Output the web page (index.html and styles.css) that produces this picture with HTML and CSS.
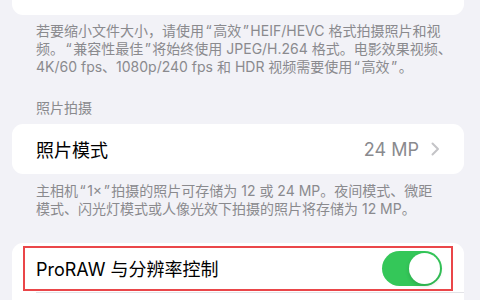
FILE: index.html
```html
<!DOCTYPE html>
<html lang="zh-CN">
<head>
<meta charset="utf-8">
<link rel="stylesheet" href="styles.css">
</head>
<body>
<div class="page">
  <div class="card card-top"></div>
  <p class="foot foot-1">若要缩小文件大小，请使用<span class="q">“</span>高效<span class="q">”</span>HEIF/HEVC 格式拍摄照片和视<br>频。<span class="q">“</span>兼容性最佳<span class="q">”</span>将始终使用 JPEG/H.264 格式。电影效果视频、<br>4K/60 fps、1080p/240 fps 和 HDR 视频需要使用<span class="q">“</span>高效<span class="q">”</span>。</p>
  <p class="head">照片拍摄</p>
  <div class="card">
    <div class="row">
      <span class="label">照片模式</span>
      <span class="value">24 MP</span>
      <svg class="chev" width="9" height="14" viewBox="0 0 9 14"><path d="M1.5 1.5 L7 7 L1.5 12.5" fill="none" stroke="#c4c4c7" stroke-width="2" stroke-linecap="round" stroke-linejoin="round"/></svg>
    </div>
  </div>
  <p class="foot foot-2">主相机<span class="q">“</span>1×<span class="q">”</span>拍摄的照片可存储为 12 或 24 MP。夜间模式、微距<br>模式、闪光灯模式或人像光效下拍摄的照片将存储为 12 MP。</p>
  <div class="card card-last">
    <div class="row row-sep">
      <span class="label">ProRAW 与分辨率控制</span>
      <span class="toggle"><span class="knob"></span></span>
      <span class="mark"></span>
    </div>
    <div class="row"></div>
  </div>
</div>
</body>
</html>
```
FILE: styles.css
```css
html, body {
  margin: 0;
  padding: 0;
  background: #f2f2f7;
  overflow: hidden;
}
body {
  width: 480px;
  height: 300px;
  font-family: Inter, "Noto Sans CJK SC", sans-serif;
}
.page {
  padding: 0 16px 0 12px;
}
.card {
  background: #fff;
  border-radius: 11px;
}
.card-top {
  height: 15px;
  border-radius: 0 0 11px 11px;
}
.foot {
  margin: 7px 0 0;
  padding: 0 20px 0 24px;
  font-size: 14px;
  line-height: 18px;
  color: #8a8a8e;
  white-space: nowrap;
}
.foot-2 {
  margin-top: 8px;
}
.q {
  margin: 0 1.5px;
}
.head {
  margin: 23px 0 7px;
  padding-left: 24px;
  font-size: 14px;
  line-height: 18px;
  color: #8a8a8e;
}
.row {
  position: relative;
  height: 50px;
  display: flex;
  align-items: center;
  padding: 0 24px;
}
.label {
  flex: 1;
  font-size: 18px;
  color: #000;
}
.value {
  font-size: 18px;
  color: #8a8a8e;
  margin-right: 12px;
}
.chev {
  display: block;
}
.card-last {
  margin-top: 25px;
  border-radius: 11px 11px 0 0;
}
.row-sep {
  padding-right: 22px;
}
.row-sep::after {
  content: "";
  position: absolute;
  left: 24px;
  right: 0;
  bottom: 0;
  height: 1px;
  background: #e3e3e7;
}
.toggle {
  width: 60px;
  height: 35px;
  border-radius: 18px;
  background: #34c759;
  display: flex;
  align-items: center;
  justify-content: flex-end;
  padding: 0 2px;
  box-sizing: border-box;
}
.knob {
  width: 31px;
  height: 31px;
  border-radius: 50%;
  background: #fff;
  box-shadow: 0 2px 4px rgba(0,0,0,0.15);
}
.mark {
  position: absolute;
  left: 11px;
  top: 3px;
  width: 430px;
  height: 45px;
  box-sizing: border-box;
  border: 2px solid #ea4649;
}
```
